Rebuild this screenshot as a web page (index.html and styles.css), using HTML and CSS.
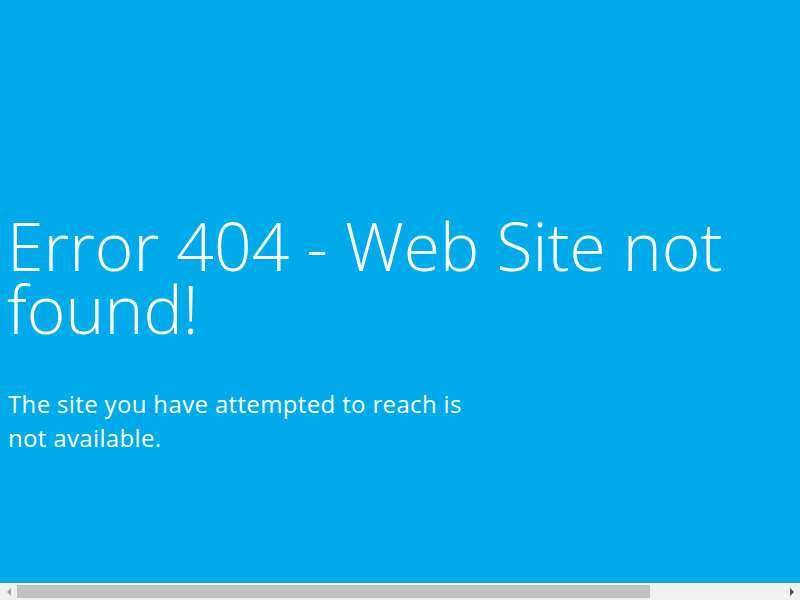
FILE: index.html
```html
<!DOCTYPE html>
<html>
  <head>
    <meta charset="utf-8">
    <title>Error 404 - Web Site not found!</title>
    <link rel="stylesheet" href="styles.css">
  </head>
  <body>
    <div class="page">
      <main class="content">
        <div class="message">
          <h1>Error 404 - Web Site not found!</h1>
          <p>The site you have attempted to reach is not available.</p>
        </div>
      </main>
      <div class="hscroll">
        <span class="arrow left"></span>
        <div class="track"><div class="thumb"></div></div>
        <span class="arrow right"></span>
      </div>
    </div>
  </body>
</html>
```

FILE: styles.css
```css
html, body {
  margin: 0;
  height: 100%;
  overflow: hidden;
}
body {
  background: #00abeb;
  color: #fff;
  font-family: "Open Sans", "Noto Sans", sans-serif;
}
.page {
  display: flex;
  flex-direction: column;
  height: 100vh;
}
.content {
  flex: 1;
  padding: 214px 0 0 7px;
}
.message h1 {
  margin: 0;
  width: 760px;
  font-size: 66px;
  font-weight: 300;
  line-height: 63px;
}
.message p {
  margin: 47px 0 0 1px;
  width: 480px;
  font-size: 24px;
  letter-spacing: 0.35px;
  line-height: 34px;
}

/* fake horizontal scrollbar */
.hscroll {
  display: flex;
  align-items: center;
  height: 17px;
  background: #f0f0f0;
}
.hscroll .track {
  flex: 1;
  height: 13px;
}
.hscroll .thumb {
  width: 633px;
  height: 100%;
  background: #c1c1c1;
}
.arrow {
  width: 17px;
  height: 17px;
  display: flex;
  align-items: center;
  justify-content: center;
}
.arrow::before {
  content: "";
  width: 0;
  height: 0;
  border-top: 4px solid transparent;
  border-bottom: 4px solid transparent;
}
.arrow.left::before {
  border-right: 4px solid #a3a3a3;
}
.arrow.right::before {
  border-left: 4px solid #505050;
}
```
